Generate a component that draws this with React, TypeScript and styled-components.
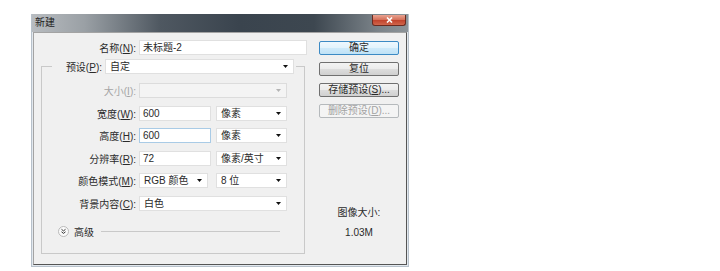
import styled, { createGlobalStyle, css } from "styled-components";

const GlobalStyle = createGlobalStyle`
  body {
    margin: 0;
    background: #fff;
    font-family: "Liberation Sans", "Noto Sans CJK SC", sans-serif;
    font-size: 10px;
    color: #2a2a2a;
  }
`;

const Page = styled.div`
  padding: 14px 0 0 31px;
`;

const Window = styled.div`
  width: 378px;
  box-sizing: border-box;
  border: 1px solid #b7c1cb;
  border-top: none;
  background: #e2e8ee;
  padding: 0 1px 1px;
`;

const TitleBar = styled.div`
  height: 18px;
  margin: 0 -1px;
  display: flex;
  justify-content: space-between;
  align-items: flex-start;
  background: linear-gradient(
    90deg,
    #b8bcc0 0%,
    #9aa0a5 14%,
    #4f5861 34%,
    #3a444e 55%,
    #3d4750 75%,
    #7b8389 92%,
    #8d9499 100%
  );
`;

const Title = styled.span`
  padding-left: 3px;
  font-size: 10px;
  line-height: 17px;
  color: #222;
`;

const CloseButton = styled.div`
  width: 34px;
  height: 11px;
  margin: 1px 2px 0 0;
  box-sizing: border-box;
  border: 1px solid #6b2a1f;
  border-top: none;
  border-radius: 0 0 3px 3px;
  background: linear-gradient(#e9a391 0%, #d6735d 45%, #c2452e 55%, #d0664c 100%);
  display: flex;
  align-items: center;
  justify-content: center;
`;

const Body = styled.div`
  height: 233px;
  box-sizing: border-box;
  display: flex;
  padding: 7px 7px 0;
  background: #f0f0f0;
  border: 1px solid;
  border-color: #a3a3a3 #555 #555 #a3a3a3;
`;

const FormColumn = styled.div`
  width: 266px;
  display: flex;
  flex-direction: column;
`;

const Row = styled.div`
  display: flex;
  align-items: center;
  height: 15px;
`;

const Label = styled.label<{ $w: number; $disabled?: boolean }>`
  width: ${(p) => p.$w}px;
  margin-right: 3px;
  text-align: right;
  white-space: nowrap;
  color: ${(p) => (p.$disabled ? "#a5a5a5" : "#2a2a2a")};
`;

const controlBase = css<{ $w: number }>`
  width: ${(p) => p.$w}px;
  height: 15px;
  box-sizing: border-box;
  background: #fff;
  border: 1px solid #e0e0e0;
  line-height: 13px;
  white-space: nowrap;
`;

const Field = styled.div<{ $w: number; $focus?: boolean }>`
  ${controlBase};
  padding: 0 3px;
  ${(p) => p.$focus && "border-color: #a9cbe6;"}
`;

const Select = styled.div<{ $w: number; $disabled?: boolean }>`
  ${controlBase};
  display: flex;
  align-items: center;
  justify-content: space-between;
  padding: 0 5px 0 4px;
  ${(p) =>
    p.$disabled &&
    css`
      background: #f4f4f4;
      border-color: #dcdcdc;
    `}
`;

const Group = styled.fieldset`
  width: 264px;
  box-sizing: border-box;
  min-width: 0;
  margin: 4px 0 0;
  padding: 0 0 15px;
  border: 1px solid #c9c9c9;
`;

const Legend = styled.legend`
  margin-left: 10px;
  padding: 0 2px;
  display: flex;
  align-items: center;
  height: 15px;
`;

const Rows = styled.div`
  margin-top: 9px;
  display: flex;
  flex-direction: column;
  gap: 7.6px;
`;

const Controls = styled.div`
  display: grid;
  grid-template-columns: 72px 71px;
  column-gap: 5px;
`;

const Advanced = styled.div`
  margin-top: 15px;
  height: 12px;
  padding-left: 16px;
  display: flex;
  align-items: center;
  gap: 5px;
`;

const Rule = styled.div`
  flex: 1;
  height: 1px;
  margin: 0 24px 0 2px;
  background: #c9c9c9;
`;

const SideColumn = styled.div`
  width: 80px;
  margin-left: 12px;
  padding-top: 1px;
  display: flex;
  flex-direction: column;
  gap: 7px;
`;

const Button = styled.div<{ $primary?: boolean; $disabled?: boolean }>`
  height: 14px;
  box-sizing: border-box;
  border: 1px solid #707070;
  border-radius: 2px;
  background: linear-gradient(#f3f3f3 0%, #ebebeb 50%, #dddddd 50%, #d0d0d0 100%);
  text-align: center;
  line-height: 12px;
  white-space: nowrap;
  ${(p) =>
    p.$primary &&
    css`
      border-color: #3c8ac4;
      background: linear-gradient(#eef8fe 0%, #e2f3fc 50%, #cfeafa 50%, #bfe2f6 100%);
    `}
  ${(p) =>
    p.$disabled &&
    css`
      border-color: #b5b9bc;
      background: #f4f4f4;
      color: #a3a3a3;
    `}
`;

const ImageInfo = styled.div`
  margin-top: auto;
  margin-bottom: 21px;
  text-align: center;
  line-height: 20px;
`;

function Arrow({ disabled }: { disabled?: boolean }) {
  return (
    <svg width="5" height="3" viewBox="0 0 5 3">
      <path d="M0 0h5L2.5 3z" fill={disabled ? "#b4b4b4" : "#111"} />
    </svg>
  );
}

function ExpandIcon() {
  return (
    <svg width="11" height="11" viewBox="0 0 11 11">
      <circle cx="5.5" cy="5.5" r="5" fill="#fbfbfb" stroke="#b9b9b9" />
      <path d="M3.5 3.3l2 1.6 2-1.6M3.5 5.8l2 1.6 2-1.6" fill="none" stroke="#333" strokeWidth="1" />
    </svg>
  );
}

function DropDown({ w, value, disabled }: { w: number; value?: string; disabled?: boolean }) {
  return (
    <Select $w={w} $disabled={disabled}>
      <span>{value}</span>
      <Arrow disabled={disabled} />
    </Select>
  );
}

export default function App() {
  return (
    <Page>
      <GlobalStyle />
      <Window>
        <TitleBar>
          <Title>新建</Title>
          <CloseButton>
            <svg width="7" height="6" viewBox="0 0 7 6">
              <path d="M1 0.5l5 5M6 0.5l-5 5" stroke="#fff" strokeWidth="1.6" />
            </svg>
          </CloseButton>
        </TitleBar>
        <Body>
          <FormColumn>
            <Row>
              <Label $w={95}>
                名称(<u>N</u>):
              </Label>
              <Field $w={168}>未标题-2</Field>
            </Row>
            <Group>
              <Legend>
                <Label $w={48}>
                  预设(<u>P</u>):
                </Label>
                <DropDown w={189} value="自定" />
              </Legend>
              <Rows>
                <Row>
                  <Label $w={94} $disabled>
                    大小(<u>I</u>):
                  </Label>
                  <DropDown w={148} disabled />
                </Row>
                <Row>
                  <Label $w={94}>
                    宽度(<u>W</u>):
                  </Label>
                  <Controls>
                    <Field $w={72}>600</Field>
                    <DropDown w={71} value="像素" />
                  </Controls>
                </Row>
                <Row>
                  <Label $w={94}>
                    高度(<u>H</u>):
                  </Label>
                  <Controls>
                    <Field $w={72} $focus>
                      600
                    </Field>
                    <DropDown w={71} value="像素" />
                  </Controls>
                </Row>
                <Row>
                  <Label $w={94}>
                    分辨率(<u>R</u>):
                  </Label>
                  <Controls>
                    <Field $w={72}>72</Field>
                    <DropDown w={71} value="像素/英寸" />
                  </Controls>
                </Row>
                <Row>
                  <Label $w={94}>
                    颜色模式(<u>M</u>):
                  </Label>
                  <Controls>
                    <DropDown w={69} value="RGB 颜色" />
                    <DropDown w={71} value="8 位" />
                  </Controls>
                </Row>
                <Row>
                  <Label $w={94}>
                    背景内容(<u>C</u>):
                  </Label>
                  <DropDown w={148} value="白色" />
                </Row>
              </Rows>
              <Advanced>
                <ExpandIcon />
                <span>高级</span>
                <Rule />
              </Advanced>
            </Group>
          </FormColumn>
          <SideColumn>
            <Button $primary>确定</Button>
            <Button>复位</Button>
            <Button>
              存储预设(<u>S</u>)...
            </Button>
            <Button $disabled>
              删除预设(<u>D</u>)...
            </Button>
            <ImageInfo>
              图像大小:
              <br />
              1.03M
            </ImageInfo>
          </SideColumn>
        </Body>
      </Window>
    </Page>
  );
}
